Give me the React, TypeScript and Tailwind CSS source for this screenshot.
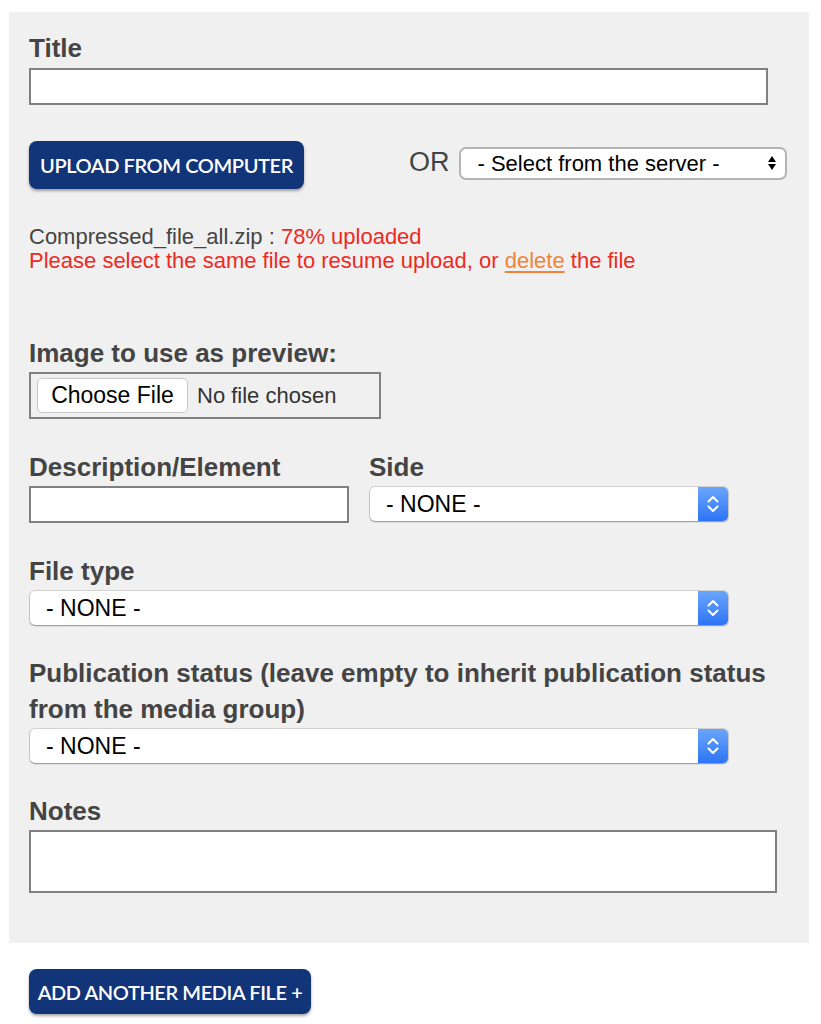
import React from "react";

const MacSelect = ({ width, label }: { width: string; label: string }) => (
  <div
    className={`${width} h-[34px] flex items-stretch rounded-[5px] bg-white shadow-[0_0_0_1px_rgba(0,0,0,0.12),0_1px_1.5px_rgba(0,0,0,0.3)] overflow-hidden`}
  >
    <div className="flex-1 flex items-center pl-[16px] text-[23px] text-black">{label}</div>
    <div className="w-[30px] flex items-center justify-center bg-gradient-to-b from-[#6aa5fb] to-[#2d74f5]">
      <svg width="14" height="20" viewBox="0 0 14 20" fill="none" stroke="white" strokeWidth="2" strokeLinecap="round" strokeLinejoin="round">
        <path d="M2.5 7.5 L7 3 L11.5 7.5" />
        <path d="M2.5 12.5 L7 17 L11.5 12.5" />
      </svg>
    </div>
  </div>
);

const Label = ({ children }: { children: React.ReactNode }) => (
  <div className="text-[26px] leading-[36px] font-bold text-[#444]">{children}</div>
);

export default function App() {
  return (
    <div className="min-h-[1024px] bg-white pt-[12px] pl-[9px] w-[821px] font-['Liberation_Sans',Arial,sans-serif]">
      <div className="w-[800px] h-[931px] bg-[#f0f0f0] pt-[18px] pl-[20px] flex flex-col">
        <Label>Title</Label>
        <div className="mt-[2px] w-[739px] h-[37px] bg-white border-2 border-[#808080]" />

        <div className="mt-[36px] flex items-center">
          <div className="w-[275px] h-[48px] rounded-[8px] bg-[#12357a] shadow-[0_2px_3px_rgba(0,0,0,0.35)] flex items-center justify-center text-white text-[20px] font-['Lato',sans-serif] font-semibold tracking-[-0.4px]">
            UPLOAD FROM COMPUTER
          </div>
          <div className="ml-[105px] mb-[6px] text-[27px] text-[#444] leading-none">OR</div>
          <div className="ml-[9px] mb-[4px] w-[328px] h-[33px] rounded-[7px] border-2 border-[#b4b4b4] bg-white flex items-center pl-[17px] pr-[8px] text-[22px] text-black">
            <span className="flex-1">- Select from the server -</span>
            <svg width="10" height="18" viewBox="0 0 10 18" fill="black">
              <path d="M5 2 L9 8 L1 8 Z" />
              <path d="M5 16 L9 10 L1 10 Z" />
            </svg>
          </div>
        </div>

        <div className="mt-[36px] text-[22px] leading-[24px] text-[#444]">
          <div>
            Compressed_file_all.zip : <span className="text-[#ee2a1e]">78% uploaded</span>
          </div>
          <div className="text-[#ee2a1e]">
            Please select the same file to resume upload, or{" "}
            <span className="text-[#f0843a] underline underline-offset-[3px]">delete</span> the file
          </div>
        </div>

        <div className="mt-[62px]">
          <Label>Image to use as preview:</Label>
        </div>
        <div className="mt-[1px] w-[352px] h-[47px] border-2 border-[#808080] flex items-center pl-[6px]">
          <div className="w-[151px] h-[35px] rounded-[5px] bg-white border border-[#c8c8c8] flex items-center justify-center text-[23px] text-black">
            Choose File
          </div>
          <span className="ml-[9px] text-[22px] text-[#333]">No file chosen</span>
        </div>

        <div className="mt-[30px] flex">
          <div className="w-[340px] flex flex-col">
            <Label>Description/Element</Label>
            <div className="mt-[1px] w-[320px] h-[37px] bg-white border-2 border-[#808080]" />
          </div>
          <div className="flex flex-col">
            <Label>Side</Label>
            <div className="mt-[2px] ml-[1px]">
              <MacSelect width="w-[358px]" label="- NONE -" />
            </div>
          </div>
        </div>

        <div className="mt-[30px]">
          <Label>File type</Label>
        </div>
        <div className="mt-[2px] ml-[1px]">
          <MacSelect width="w-[698px]" label="- NONE -" />
        </div>

        <div className="mt-[30px] w-[770px]">
          <Label>
            Publication status (leave empty to inherit publication status
            <br />
            from the media group)
          </Label>
        </div>
        <div className="mt-[2px] ml-[1px]">
          <MacSelect width="w-[698px]" label="- NONE -" />
        </div>

        <div className="mt-[30px]">
          <Label>Notes</Label>
        </div>
        <div className="mt-[1px] w-[748px] h-[63px] bg-white border-2 border-[#808080]" />
      </div>

      <div className="mt-[26px] ml-[20px] w-[282px] h-[45px] rounded-[8px] bg-[#12357a] shadow-[0_2px_3px_rgba(0,0,0,0.35)] flex items-center justify-center text-white text-[20px] font-['Lato',sans-serif] font-semibold tracking-[-0.4px]">
        ADD ANOTHER MEDIA FILE +
      </div>
    </div>
  );
}
